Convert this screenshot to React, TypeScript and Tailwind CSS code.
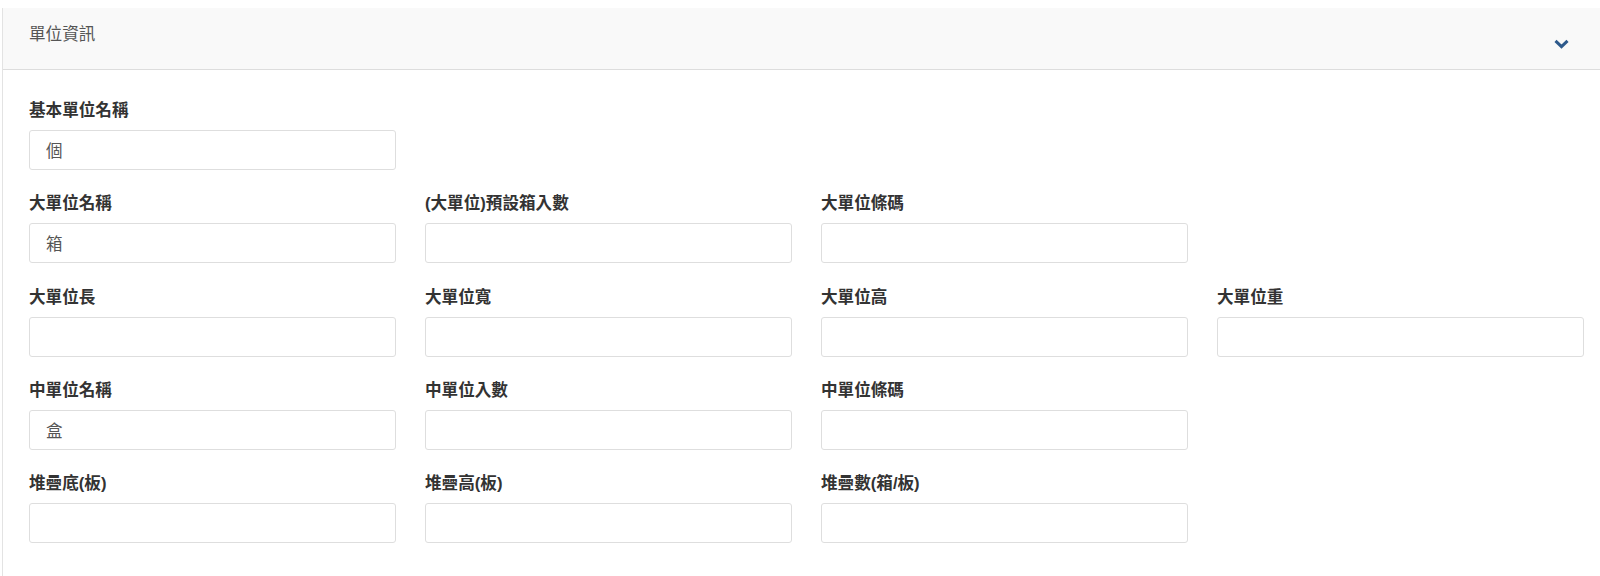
import React from 'react';

type Field = { label: string; value?: string };

const rows: Field[][] = [
  [{ label: '基本單位名稱', value: '個' }],
  [
    { label: '大單位名稱', value: '箱' },
    { label: '(大單位)預設箱入數' },
    { label: '大單位條碼' },
  ],
  [
    { label: '大單位長' },
    { label: '大單位寬' },
    { label: '大單位高' },
    { label: '大單位重' },
  ],
  [
    { label: '中單位名稱', value: '盒' },
    { label: '中單位入數' },
    { label: '中單位條碼' },
  ],
  [
    { label: '堆疊底(板)' },
    { label: '堆疊高(板)' },
    { label: '堆疊數(箱/板)' },
  ],
];

const FormField: React.FC<{ field: Field }> = ({ field }) => (
  <div className="flex flex-col">
    <label className="mb-[8px] text-[16.6px] font-bold leading-[22px] text-[#333]">
      {field.label}
    </label>
    <input
      type="text"
      defaultValue={field.value ?? ''}
      className="h-[40px] w-full rounded-[3px] border border-[#dedede] bg-white px-[16px] text-[16.5px] text-[#555] outline-none"
    />
  </div>
);

const App: React.FC = () => {
  return (
    <div
      className="min-h-[576px] bg-white pt-[8px] pl-[2px]"
      style={{ fontFamily: '"Liberation Sans", "Noto Sans CJK TC", sans-serif' }}
    >
      <div className="border-l border-[#e3e3e3]">
        {/* Panel header */}
        <div className="flex h-[62px] items-start justify-between border-b border-[#dddddd] bg-[#f9f9f9] pt-[16px] pl-[26px] pr-[31px]">
          <span className="text-[16.6px] leading-[22px] text-[#555]">單位資訊</span>
          <svg width="15" height="10" viewBox="0 0 15 10" className="mt-[15px]">
            <path d="M1.5 1.8 L7.5 7.6 L13.5 1.8" fill="none" stroke="#2e5a8c" strokeWidth="3" />
          </svg>
        </div>

        {/* Panel body */}
        <div className="flex flex-col gap-[23.3px] pt-[30px] pb-[34px] pl-[26px]">
          {rows.map((row, i) => (
            <div key={i} className="grid w-[1555px] grid-cols-4 gap-x-[29px]">
              {row.map((f) => (
                <FormField key={f.label} field={f} />
              ))}
            </div>
          ))}
        </div>
      </div>
    </div>
  );
};

export default App;
